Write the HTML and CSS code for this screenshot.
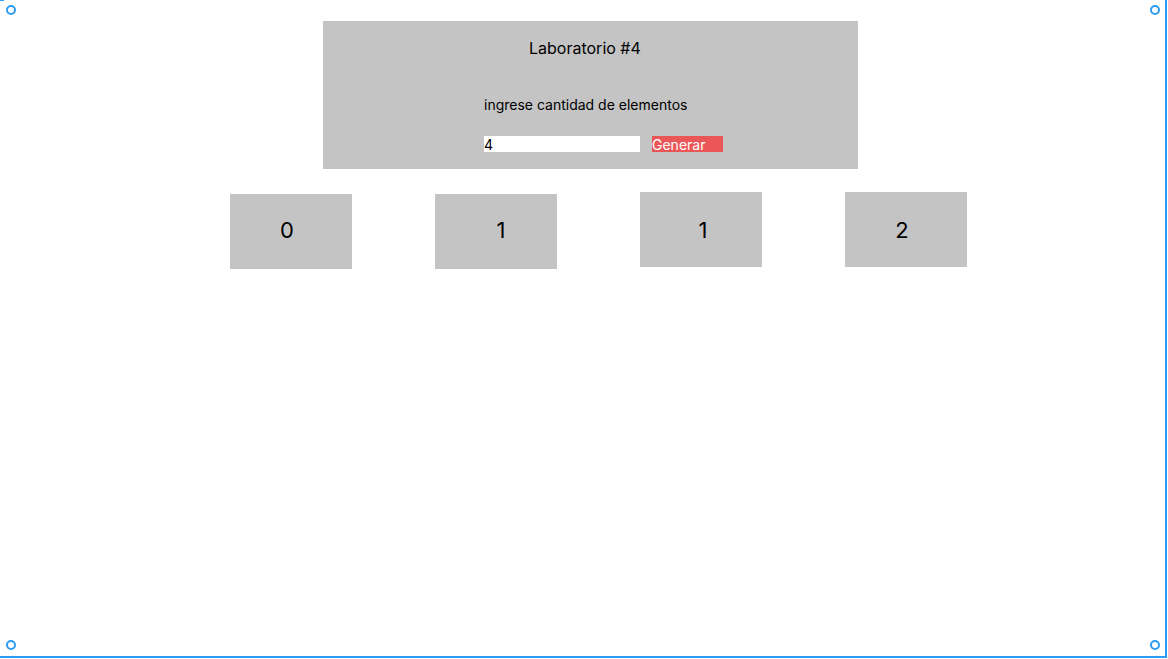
FILE: index.html
```html
<!DOCTYPE html>
<html lang="es">
<head>
<meta charset="utf-8">
<title>Laboratorio #4</title>
<link rel="stylesheet" href="styles.css">
</head>
<body>
<div class="frame">
  <section class="panel">
    <h1 class="title">Laboratorio #4</h1>
    <p class="label">ingrese cantidad de elementos</p>
    <div class="controls">
      <input class="count" type="text" value="4">
      <button class="generate" type="button">Generar</button>
    </div>
  </section>
  <div class="cards">
    <div class="card card-a">0</div>
    <div class="card card-b">1</div>
    <div class="card card-raised card-c">1</div>
    <div class="card card-raised card-d">2</div>
  </div>
  <span class="handle handle-tl"></span>
  <span class="handle handle-tr"></span>
  <span class="handle handle-bl"></span>
  <span class="handle handle-br"></span>
  <span class="tick-tl"></span>
</div>
</body>
</html>
```

FILE: styles.css
```css
* { box-sizing: border-box; }
html, body { margin: 0; padding: 0; background: #ffffff; }
body { font-family: Inter, "Noto Sans", sans-serif; color: #000; }

.frame {
  position: relative;
  width: 1167px;
  height: 658px;
  border-right: 2px solid #2d9cf4;
  border-bottom: 2px solid #2d9cf4;
  padding-top: 21px;
  overflow: hidden;
}

.panel {
  margin-left: 323px;
  width: 535px;
  height: 148px;
  background: #c4c4c4;
  padding-top: 18px;
}
.title {
  margin: 0 0 0 206px;
  font-size: 16px;
  font-weight: 400;
  line-height: 19px;
}
.label {
  margin: 38px 0 0 161px;
  font-size: 14px;
  line-height: 17px;
}
.controls {
  margin: 23px 0 0 161px;
  display: flex;
  gap: 12px;
}
.count {
  width: 156px;
  height: 16px;
  border: 0;
  padding: 1px 0 0 0;
  margin: 0;
  background: #fff;
  font-family: Inter, "Noto Sans", sans-serif;
  font-size: 14px;
  line-height: 15px;
  color: #000;
  outline: none;
}
.generate {
  width: 71px;
  height: 16px;
  border: 0;
  padding: 1px 0 0 0;
  margin: 0;
  background: #eb5757;
  color: #fff;
  font-family: Inter, "Noto Sans", sans-serif;
  font-size: 14px;
  line-height: 15px;
  text-align: left;
}

.cards {
  display: flex;
  gap: 83px;
  margin: 25px 0 0 230px;
  align-items: flex-start;
}
.card {
  width: 122px;
  height: 75px;
  background: #c4c4c4;
  display: flex;
  align-items: center;
  justify-content: center;
  font-size: 22px;
  line-height: 1;
}
.card-raised { margin-top: -2px; }
.card-a { padding: 0 8px 4px 0; }
.card-b { padding: 0 0 4px 10px; }
.card-c { padding: 0 0 0 4px; }
.card-d { padding: 0 8px 0 0; }

.handle {
  position: absolute;
  width: 10px;
  height: 10px;
  border: 2px solid #2d9cf4;
  border-radius: 50%;
  background: #fff;
}
.handle-tl { left: 6px; top: 5px; }
.handle-tr { left: 1150px; top: 5px; }
.handle-bl { left: 6px; top: 640px; }
.handle-br { left: 1150px; top: 640px; }
.tick-tl {
  position: absolute;
  left: 0;
  top: 0;
  width: 4px;
  height: 1px;
  background: #2d9cf4;
}
```
